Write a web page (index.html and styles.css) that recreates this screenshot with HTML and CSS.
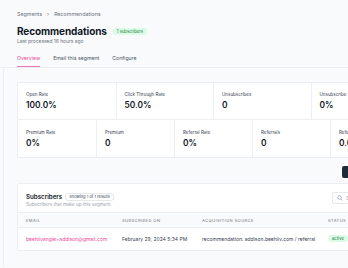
FILE: index.html
```html
<!DOCTYPE html>
<html lang="en">
<head>
    <meta charset="UTF-8">
    <meta name="viewport" content="width=device-width, initial-scale=1.0">
    <title>Recommendations</title>
    <link rel="stylesheet" href="styles.css">
</head>
<body>
    <div class="page">
        <div class="header">
            <div class="crumbs">
                <span>Segments</span>
                <span class="sep">&rsaquo;</span>
                <span>Recommendations</span>
            </div>
            <div class="title-row">
                <h1>Recommendations</h1>
                <span class="badge green">1 subscribers</span>
            </div>
            <div class="sub">Last processed 16 hours ago</div>
            <div class="tabs">
                <a href="javascript:;" class="tab active">Overview</a>
                <a href="javascript:;" class="tab">Email this segment</a>
                <a href="javascript:;" class="tab">Configure</a>
            </div>
        </div>

        <div class="content">
            <div class="stats">
                <div class="stat-row four">
                    <div class="stat"><span class="label">Open Rate</span><span class="value">100.0%</span></div>
                    <div class="stat"><span class="label">Click Through Rate</span><span class="value">50.0%</span></div>
                    <div class="stat"><span class="label">Unsubscribes</span><span class="value">0</span></div>
                    <div class="stat"><span class="label">Unsubscribe Rate</span><span class="value">0%</span></div>
                </div>
                <div class="stat-row five">
                    <div class="stat"><span class="label">Premium Rate</span><span class="value">0%</span></div>
                    <div class="stat"><span class="label">Premium</span><span class="value">0</span></div>
                    <div class="stat"><span class="label">Referral Rate</span><span class="value">0%</span></div>
                    <div class="stat"><span class="label">Referrals</span><span class="value">0</span></div>
                    <div class="stat"><span class="label">Referral Revenue</span><span class="value">0.0</span></div>
                </div>
            </div>

            <div class="actions">
                <a href="javascript:;" class="btn-dark">Export CSV</a>
            </div>

            <div class="card">
                <div class="card-top">
                    <div>
                        <div class="card-title">
                            <h2>Subscribers</h2>
                            <span class="badge outline">Showing 1 of 1 results</span>
                        </div>
                        <div class="card-sub">Subscribers that make up this segment</div>
                    </div>
                    <div class="search">
                        <svg width="6" height="6" viewBox="0 0 12 12" fill="none" stroke="#9ca3af" stroke-width="1.6">
                            <circle cx="5" cy="5" r="3.6"/>
                            <path d="M7.7 7.7L11 11"/>
                        </svg>
                        <span>Search</span>
                    </div>
                </div>
                <table>
                    <colgroup>
                        <col class="c-email">
                        <col class="c-date">
                        <col class="c-src">
                        <col>
                    </colgroup>
                    <thead>
                        <tr>
                            <th>Email</th>
                            <th>Subscribed On</th>
                            <th>Acquisition Source</th>
                            <th>Status</th>
                        </tr>
                    </thead>
                    <tbody>
                        <tr>
                            <td class="email">beehiivangie+addison@gmail.com</td>
                            <td>February 29, 2024 5:34 PM</td>
                            <td>recommendation: addison.beehiiv.com / referral</td>
                            <td><span class="badge green">active</span></td>
                        </tr>
                    </tbody>
                </table>
            </div>
        </div>
    </div>
</body>
</html>
```

FILE: styles.css
```css
*, *:before, *:after {
    box-sizing: border-box;
}

:root {
    --bg: #f9fafb;
    --white: #fff;
    --line: #eceef1;
    --dark: #111827;
    --grey: #6b7280;
    --light-grey: #9ca3af;
}

html, body {
    margin: 0;
    overflow: hidden;
}

body {
    background-color: var(--bg);
    font-family: Inter, "Liberation Sans", sans-serif;
    color: var(--dark);
    width: 348px;
    height: 268px;
}

.page {
    width: 430px;
}

.header {
    padding: 10px 17px 0;
    border-bottom: 1px solid var(--line);
}

.crumbs {
    display: flex;
    gap: 5px;
    font-size: 5.3px;
    color: var(--grey);
    height: 7px;
    align-items: center;
}

.title-row {
    display: flex;
    align-items: center;
    gap: 6px;
    margin-top: 8px;
}

h1 {
    margin: 0;
    font-size: 10px;
    font-weight: 700;
    letter-spacing: -0.1px;
    line-height: 13px;
}

.badge {
    display: inline-block;
    font-size: 4.2px;
    line-height: 7px;
    padding: 0 4px;
    border-radius: 3px;
}

.badge.green {
    background-color: #dcfce7;
    color: #15803d;
}

.badge.outline {
    border: 1px solid #e5e7eb;
    background-color: var(--white);
    color: #374151;
    font-size: 4px;
    line-height: 6px;
    padding: 0 3px;
}

.sub {
    font-size: 4.9px;
    color: var(--grey);
    line-height: 7px;
}

.tabs {
    display: flex;
    gap: 13px;
    margin-top: 8px;
}

.tab {
    font-size: 5.2px;
    color: #4b5563;
    text-decoration: none;
    line-height: 7px;
    padding: 2px 0 4px;
    border-bottom: 1.5px solid transparent;
}

.tab.active {
    color: #ec4899;
    border-bottom-color: #f472b6;
}

.content {
    margin-left: 3px;
    border-left: 1px solid var(--line);
    padding: 14px 13px 16px;
}

.stats {
    width: 392px;
    background-color: var(--white);
    border: 1px solid var(--line);
    border-radius: 2px;
}

.stat-row {
    display: grid;
    height: 37px;
}

.stat-row.four {
    grid-template-columns: repeat(4, 1fr);
    border-bottom: 1px solid var(--line);
}

.stat-row.five {
    grid-template-columns: repeat(5, 1fr);
}

.stat {
    display: flex;
    flex-direction: column;
    justify-content: center;
    gap: 3px;
    padding: 0 8px;
    border-left: 1px solid var(--line);
}

.stat:first-child {
    border-left: none;
}

.label {
    font-size: 4.5px;
    color: #374151;
}

.value {
    font-size: 8.4px;
    font-weight: 600;
}

.actions {
    width: 392px;
    display: flex;
    justify-content: flex-end;
    padding: 8px 0 5px;
}

.btn-dark {
    display: block;
    width: 67px;
    height: 12px;
    background-color: #1f2937;
    border-radius: 2px;
    color: var(--white);
    font-size: 5px;
    line-height: 12px;
    padding-left: 8px;
    text-decoration: none;
}

.card {
    width: 392px;
    background-color: var(--white);
    border: 1px solid var(--line);
    border-radius: 2px;
}

.card-top {
    display: flex;
    justify-content: space-between;
    align-items: flex-start;
    padding: 8px 8px 4px;
}

.card-title {
    display: flex;
    align-items: center;
    gap: 3px;
}

h2 {
    margin: 0;
    font-size: 6.2px;
    font-weight: 600;
    line-height: 9px;
}

.card-sub {
    font-size: 4.6px;
    color: var(--light-grey);
    line-height: 7px;
}

.search {
    display: flex;
    align-items: center;
    gap: 3px;
    width: 68px;
    height: 12px;
    border: 1px solid #e5e7eb;
    border-radius: 2px;
    padding: 0 4px;
    font-size: 5px;
    color: var(--light-grey);
}

table {
    width: 100%;
    border-collapse: collapse;
    table-layout: fixed;
}

.c-email {
    width: 96px;
}

.c-date {
    width: 80px;
}

.c-src {
    width: 126px;
}

th {
    background-color: var(--bg);
    text-align: left;
    font-size: 4.1px;
    font-weight: 400;
    letter-spacing: 0.4px;
    text-transform: uppercase;
    color: #6b7280;
    height: 15px;
    padding: 0 8px;
    border-top: 1px solid var(--line);
    border-bottom: 1px solid var(--line);
    white-space: nowrap;
}

td {
    font-size: 5px;
    color: #374151;
    height: 22px;
    padding: 0 8px;
    white-space: nowrap;
}

td.email {
    color: #ec4899;
}
```
